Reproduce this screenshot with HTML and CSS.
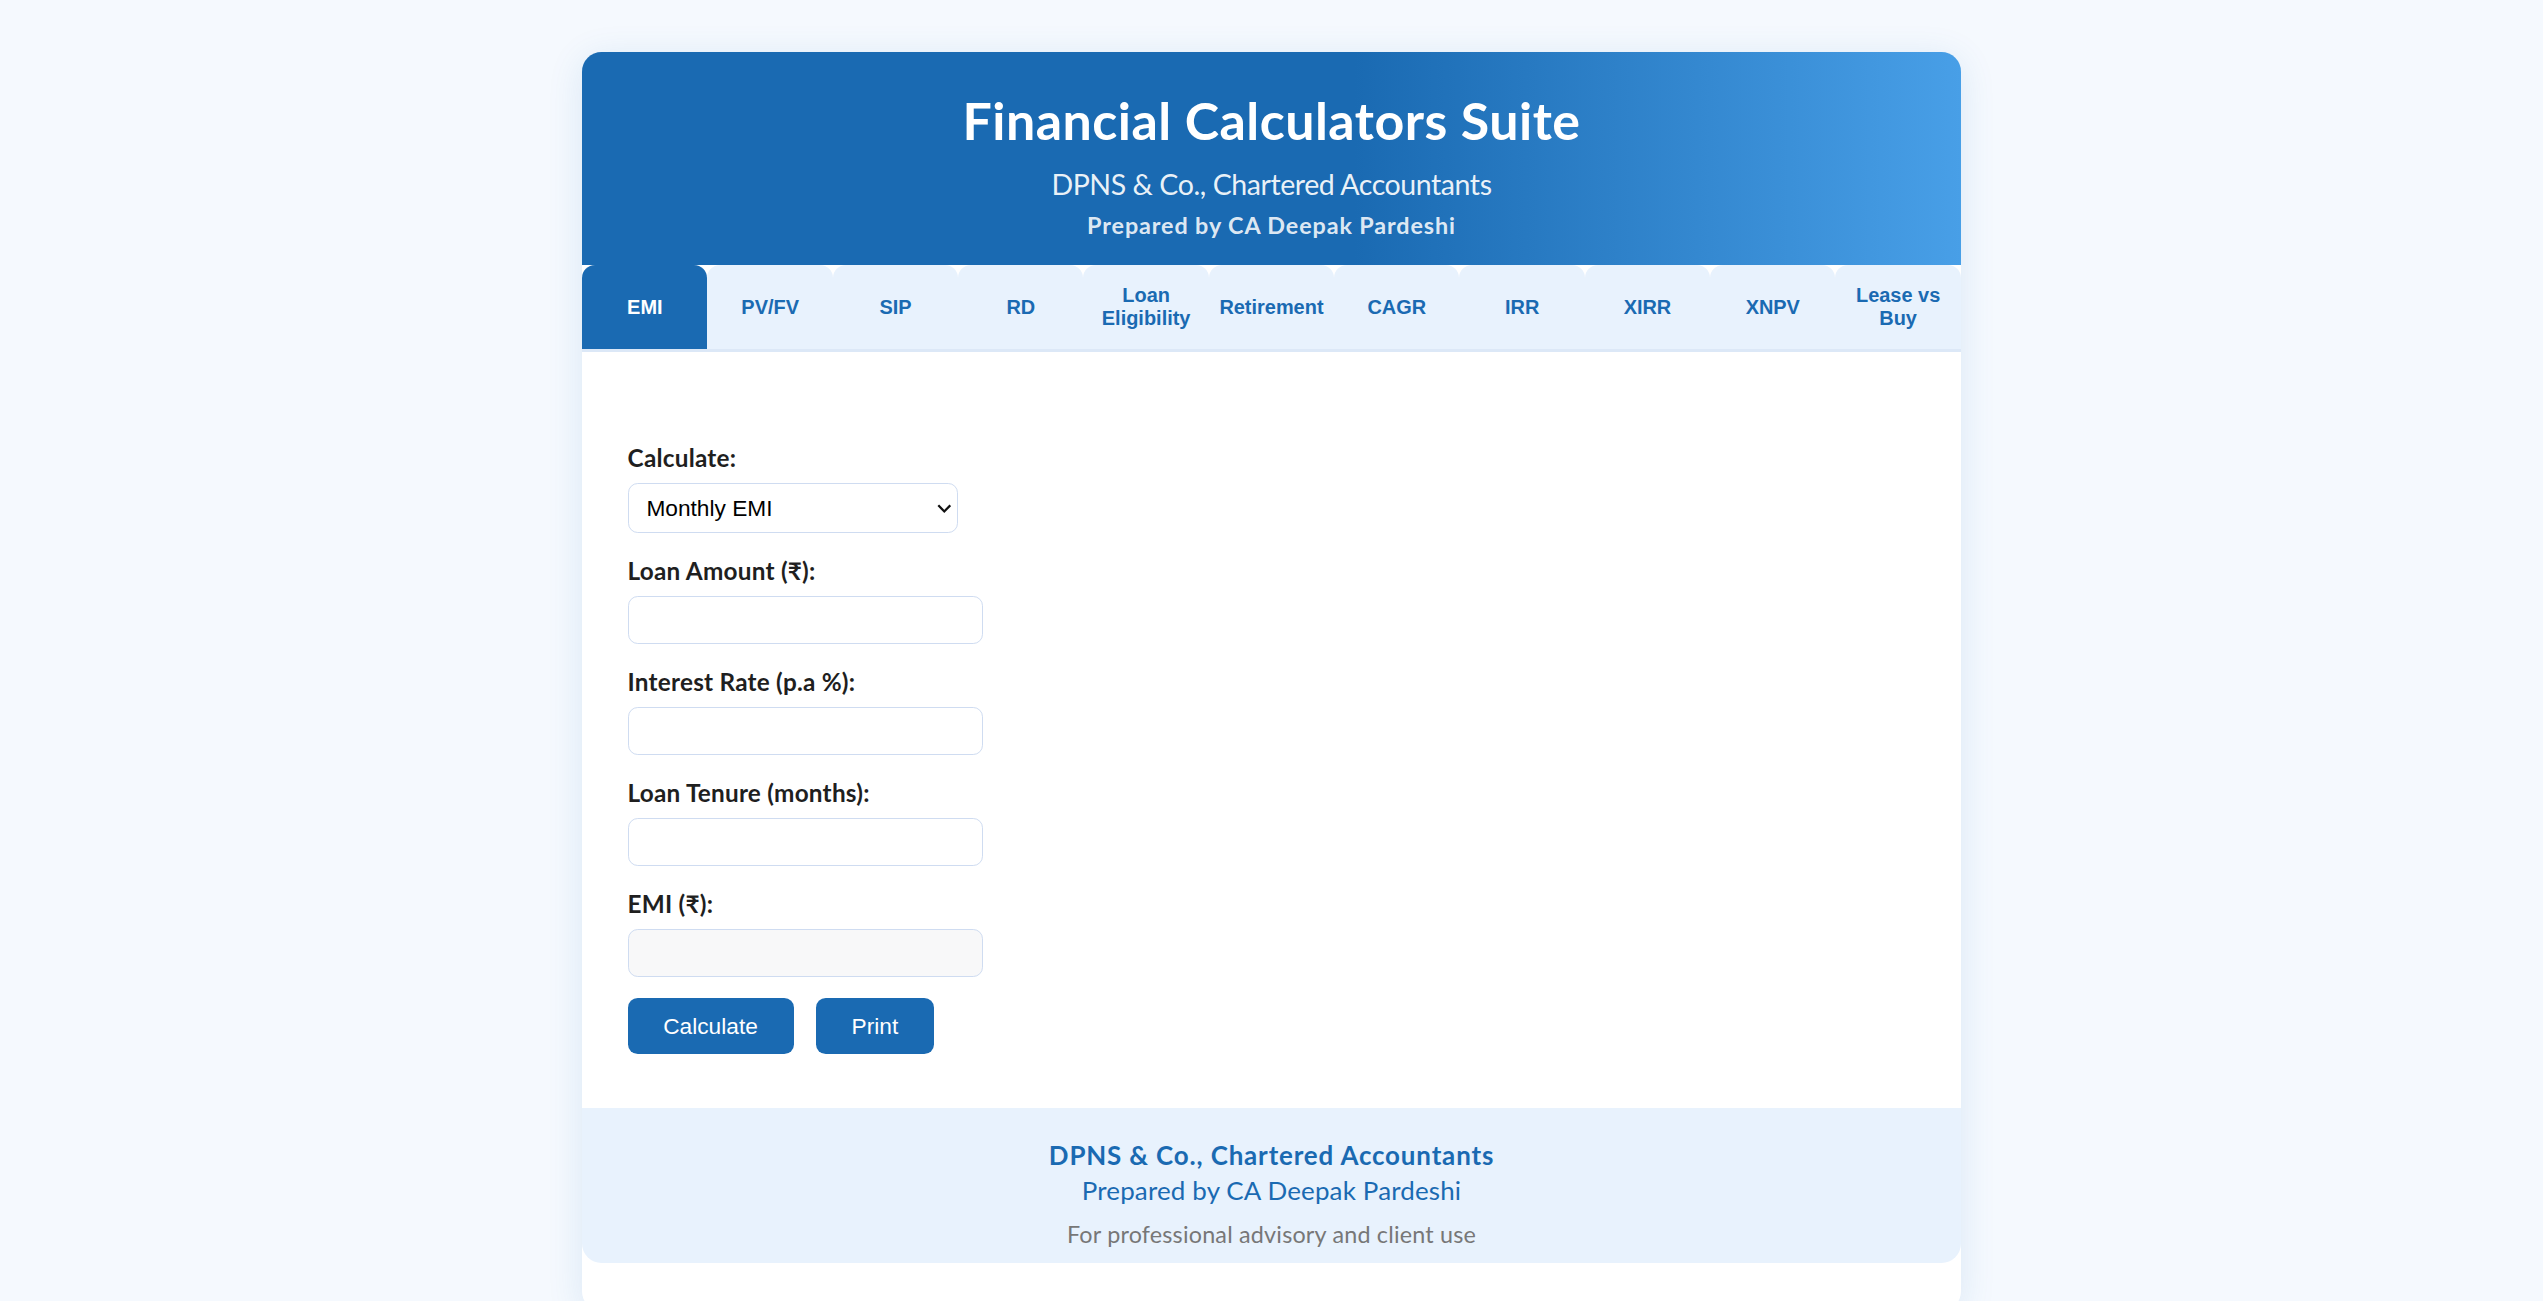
FILE: index.html
```html
<!DOCTYPE html>
<html lang="en">
<head>
<meta charset="utf-8">
<title>Financial Calculators Suite</title>
<link rel="stylesheet" href="styles.css">
</head>
<body>
<div class="card">
  <header class="hero">
    <h1 class="hero-title">Financial Calculators Suite</h1>
    <p class="hero-sub">DPNS &amp; Co., Chartered Accountants</p>
    <p class="hero-by">Prepared by CA Deepak Pardeshi</p>
  </header>
  <nav class="tabs">
    <button class="tab active">EMI</button>
    <button class="tab">PV/FV</button>
    <button class="tab">SIP</button>
    <button class="tab">RD</button>
    <button class="tab">Loan Eligibility</button>
    <button class="tab">Retirement</button>
    <button class="tab">CAGR</button>
    <button class="tab">IRR</button>
    <button class="tab">XIRR</button>
    <button class="tab">XNPV</button>
    <button class="tab">Lease vs Buy</button>
  </nav>
  <main class="content">
    <label class="field-label">Calculate:</label>
    <div class="select-wrap">
      <select class="field-select">
        <option>Monthly EMI</option>
        <option>Loan Amount</option>
        <option>Interest Rate</option>
        <option>Loan Tenure</option>
      </select>
      <svg class="chev" width="9" height="6" viewBox="0 0 9 6"><path d="M0.8 0.8 L4.5 4.6 L8.2 0.8" fill="none" stroke="#111" stroke-width="1.4"/></svg>
    </div>
    <label class="field-label">Loan Amount (₹):</label>
    <input class="field-input" type="text">
    <label class="field-label">Interest Rate (p.a %):</label>
    <input class="field-input" type="text">
    <label class="field-label">Loan Tenure (months):</label>
    <input class="field-input" type="text">
    <label class="field-label">EMI (₹):</label>
    <input class="field-input readonly" type="text" readonly>
    <div class="actions">
      <button class="btn">Calculate</button>
      <button class="btn">Print</button>
    </div>
  </main>
  <footer class="foot">
    <p class="foot-firm">DPNS &amp; Co., Chartered Accountants</p>
    <p class="foot-by">Prepared by CA Deepak Pardeshi</p>
    <p class="foot-note">For professional advisory and client use</p>
  </footer>
  <div class="card-end"></div>
</div>
</body>
</html>
```
FILE: styles.css
```css
html {
  zoom: 1.622;
}
body {
  margin: 0;
  background: #f5f9fe;
  font-family: Lato, "Noto Sans", "DejaVu Sans", sans-serif;
  color: #222;
}
.card {
  width: 850px;
  margin: 32px auto 0;
  background: #fff;
  border-radius: 12px;
  overflow: hidden;
  box-shadow: 0 4px 22px rgba(26, 107, 179, 0.12);
}
.hero {
  background: linear-gradient(90deg, #1a6ab2 0%, #1a6ab2 56%, #489fe7 100%);
  color: #fff;
  text-align: center;
  padding: 22.5px 20px 14.5px;
}
.hero-title {
  margin: 0;
  font-size: 32px;
  line-height: 40px;
  font-weight: 700;
  letter-spacing: 0.3px;
}
.hero-sub {
  margin: 7.3px 0 0;
  font-size: 17.6px;
  line-height: 24px;
  letter-spacing: -0.27px;
  color: rgba(255, 255, 255, 0.92);
}
.hero-by {
  margin: 3.1px 0 0;
  font-size: 14.4px;
  line-height: 20px;
  font-weight: 700;
  letter-spacing: 0.55px;
  color: rgba(255, 255, 255, 0.87);
}
.tabs {
  display: flex;
  background: #fff;
  border-bottom: 2px solid #dce8f7;
}
.tab {
  flex: 1 1 0;
  min-width: 0;
  display: flex;
  align-items: center;
  justify-content: center;
  padding: 12px 5px;
  border: none;
  border-radius: 8px 8px 0 0;
  background: #e8f2fd;
  color: #1a6ab2;
  font-family: "Liberation Sans", Arial, sans-serif;
  font-weight: 700;
  font-size: 12.3px;
  line-height: 13.8px;
  text-align: center;
}
.tab.active {
  background: #1a6ab2;
  color: #fff;
}
.content {
  padding: 56px 28px 33.4px;
}
.field-label {
  display: block;
  font-size: 15px;
  line-height: 20px;
  font-weight: 700;
  letter-spacing: 0.14px;
  color: #1f1f1f;
  margin-bottom: 5px;
}
.select-wrap {
  position: relative;
  width: 203.5px;
  margin-bottom: 14px;
}
.field-select {
  display: block;
  appearance: none;
  -webkit-appearance: none;
  width: 100%;
  height: 30.5px;
  box-sizing: border-box;
  padding: 0 11px;
  border: 1px solid #cfdcf1;
  border-radius: 6px;
  background: #fff;
  font-family: "Liberation Sans", Arial, sans-serif;
  font-size: 14px;
  color: #000;
}
.chev {
  position: absolute;
  right: 3.8px;
  top: 12.8px;
  pointer-events: none;
}
.field-input {
  display: block;
  width: 219px;
  height: 29.5px;
  box-sizing: border-box;
  border: 1px solid #cfdcf1;
  border-radius: 6px;
  background: #fff;
  margin: 0 0 14px;
  padding: 0 10px;
  font-family: "Liberation Sans", Arial, sans-serif;
  font-size: 14px;
}
.field-input.readonly {
  background: #f8f8f9;
  margin-bottom: 13px;
}
.actions {
  display: flex;
  gap: 13.8px;
}
.btn {
  padding: 9px 22px;
  border: none;
  border-radius: 6px;
  background: #1a6ab2;
  color: #fff;
  font-family: "Liberation Sans", Arial, sans-serif;
  font-size: 14px;
  line-height: 16.3px;
}
.foot {
  background: #e8f2fd;
  border-radius: 0 0 12px 12px;
  text-align: center;
  padding: 18.4px 20px 7.9px;
}
.foot p {
  margin: 0;
}
.foot-firm {
  font-size: 16px;
  line-height: 22px;
  font-weight: 700;
  letter-spacing: 0.52px;
  color: #1a6ab2;
}
.foot-by {
  font-size: 16px;
  line-height: 22px;
  letter-spacing: 0.1px;
  color: #1a6ab2;
}
.foot-note {
  margin-top: 5.3px !important;
  font-size: 14.4px;
  line-height: 20px;
  letter-spacing: 0.12px;
  color: #777;
}
.card-end {
  height: 30px;
}
```
